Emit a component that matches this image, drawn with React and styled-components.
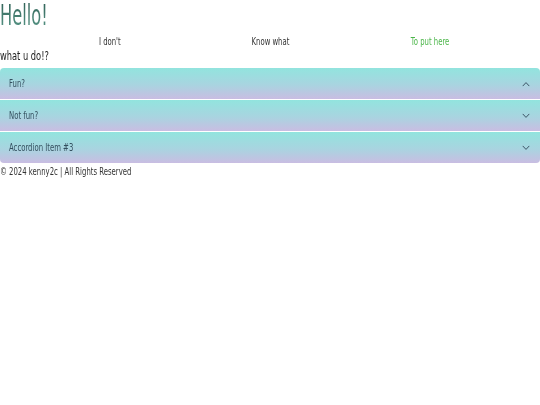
import React from 'react';
import styled, { createGlobalStyle } from 'styled-components';

const GlobalStyle = createGlobalStyle`
  html, body {
    margin: 0;
    padding: 0;
    background: #fff;
  }
  body {
    font-family: 'DejaVu Sans', 'Liberation Sans', sans-serif;
    color: #222;
  }
`;

const items = [
  { title: 'Fun?', open: true },
  { title: 'Not fun?', open: false },
  { title: 'Accordion Item #3', open: false },
];

const Chevron = ({ up }) => (
  <svg width="8" height="6" viewBox="0 0 8 6" fill="none">
    <path
      d={up ? 'M1 4.8 L4 1.6 L7 4.8' : 'M1 1.2 L4 4.4 L7 1.2'}
      stroke="#3d5566"
      strokeWidth="1"
      strokeLinecap="round"
      strokeLinejoin="round"
    />
  </svg>
);

const App = () => {
  return (
    <Page>
      <GlobalStyle />
      <Title>Hello!</Title>
      <Nav>
        <NavItem><Narrow $center>I don't</Narrow></NavItem>
        <NavItem><Narrow $center>Know what</Narrow></NavItem>
        <NavItem $accent><Narrow $center>To put here</Narrow></NavItem>
      </Nav>
      <Question><Narrow>what u do!?</Narrow></Question>
      <Accordion>
        {items.map((item) => (
          <Item key={item.title}>
            <Narrow>{item.title}</Narrow>
            <Chevron up={item.open} />
          </Item>
        ))}
      </Accordion>
      <Footer><Narrow>© 2024 kenny2c | All Rights Reserved</Narrow></Footer>
    </Page>
  );
};

const Page = styled.div`
  width: 540px;
`;

// the face in the shot is a condensed one, squeeze DejaVu to match
const Narrow = styled.span`
  display: inline-block;
  white-space: nowrap;
  transform: scaleX(0.69);
  transform-origin: ${(p) => (p.$center ? 'center' : 'left')} center;
`;

const Title = styled.h1`
  margin: 0;
  padding-top: 1px;
  font-size: 28px;
  font-weight: normal;
  line-height: 30px;
  display: inline-block;
  transform: scaleX(0.58);
  transform-origin: left center;
  background: linear-gradient(180deg, #2f5f55 0%, #5a9a8a 100%);
  -webkit-background-clip: text;
  background-clip: text;
  color: transparent;
`;

const Nav = styled.div`
  display: grid;
  grid-template-columns: repeat(3, 1fr);
  padding: 5px 30px 0;
  font-size: 10px;
  line-height: 12px;
`;

const NavItem = styled.div`
  text-align: center;
  color: ${(p) => (p.$accent ? '#4cb64a' : '#333')};
`;

const Question = styled.div`
  font-size: 12px;
  line-height: 14px;
  margin-top: 1px;
`;

const Accordion = styled.div`
  margin-top: 5px;
  display: flex;
  flex-direction: column;
  gap: 1px;
  border-radius: 4px;
  overflow: hidden;
`;

const Item = styled.div`
  height: 31px;
  display: flex;
  align-items: center;
  justify-content: space-between;
  padding: 0 10px 0 9px;
  background: linear-gradient(180deg, #92e4de 0%, #a9d4e0 55%, #c9bde2 100%);
  color: #34505f;
  font-size: 10px;
`;

const Footer = styled.div`
  font-size: 10px;
  line-height: 14px;
  margin-top: 2px;
  color: #333;
`;

export default App;
